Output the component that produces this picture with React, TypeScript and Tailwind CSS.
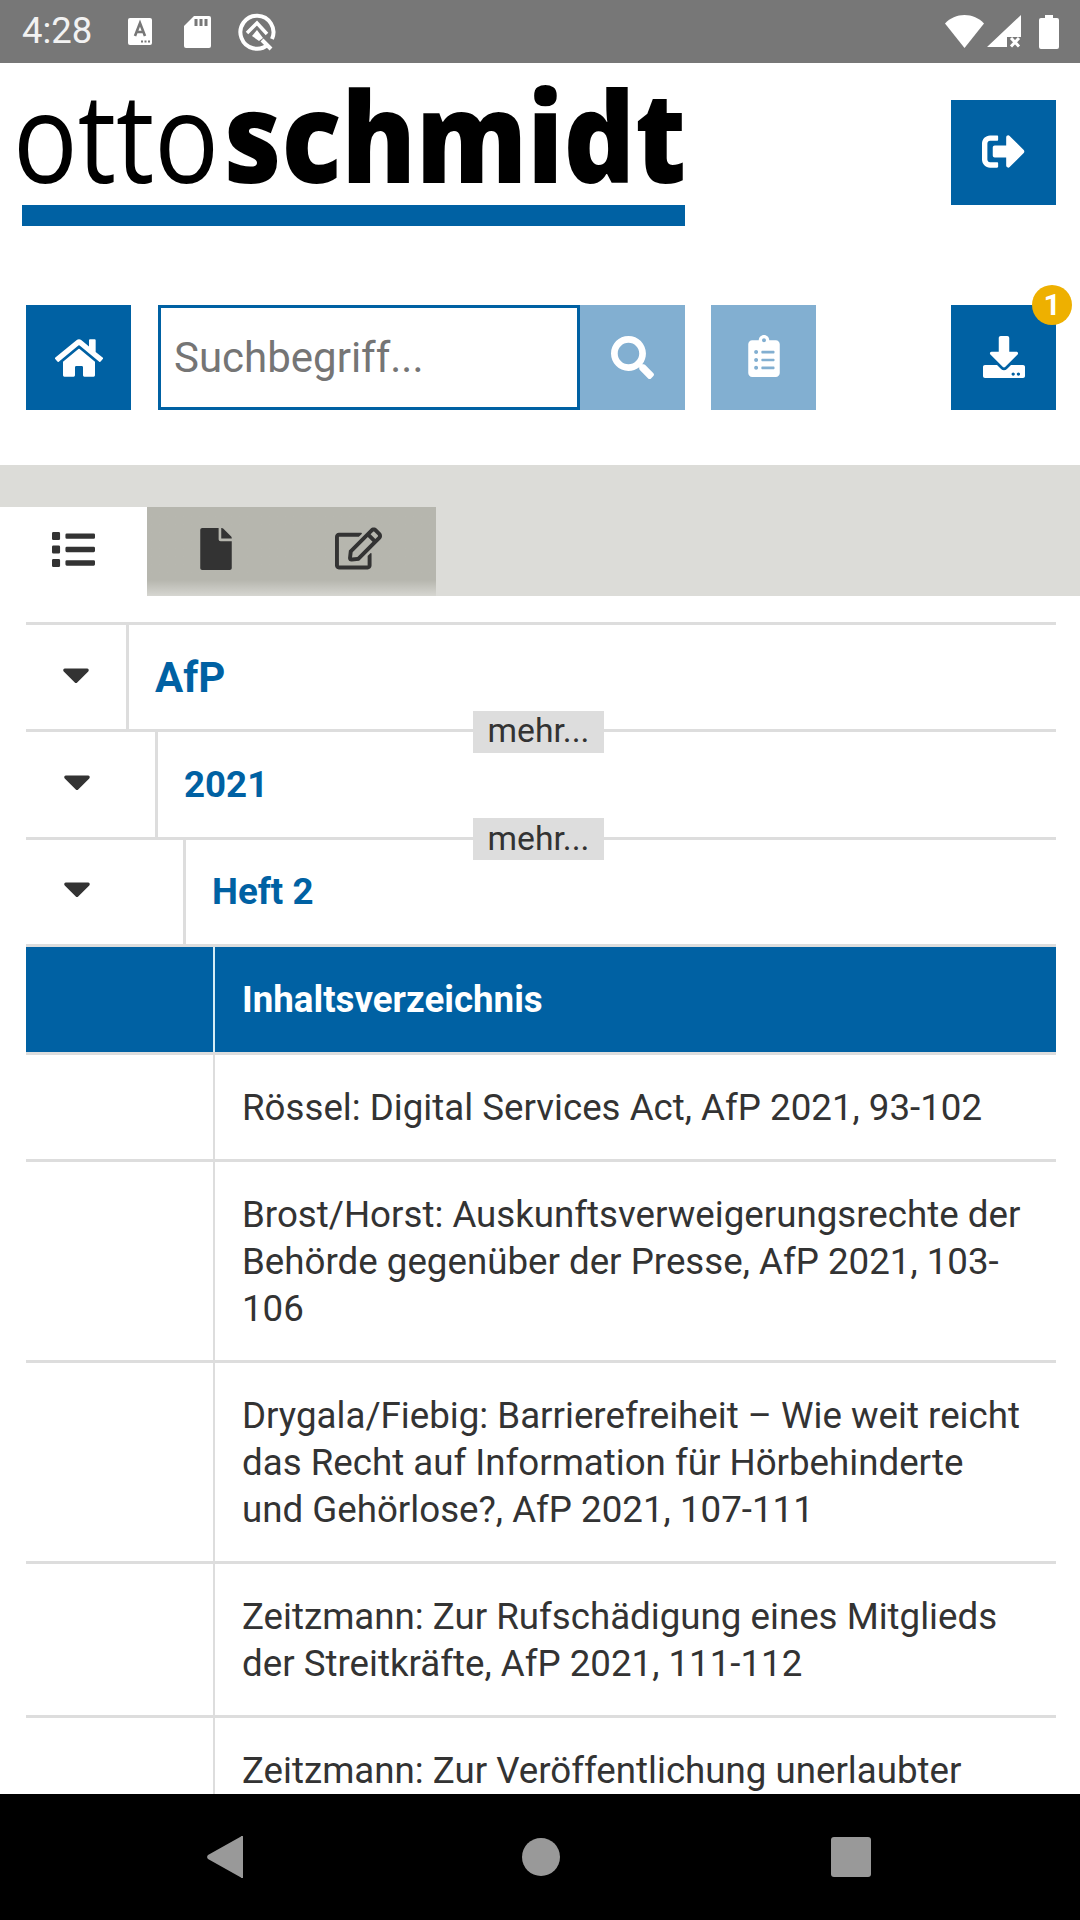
import React from 'react';
import {
  FaCaretDown,
  FaClipboardList,
  FaDownload,
  FaFile,
  FaHome,
  FaList,
  FaRegEdit,
  FaSearch,
  FaSignOutAlt,
} from 'react-icons/fa';

const treeRows = [
  { label: 'AfP', caretCol: 'w-[103px]', text: 'text-[42px]', more: true },
  { label: '2021', caretCol: 'w-[132px]', text: 'text-[36.7px]', more: true },
  { label: 'Heft 2', caretCol: 'w-[160px]', text: 'text-[36.7px]', more: false },
];

const entries = [
  ['Rössel: Digital Services Act, AfP 2021, 93-102'],
  ['Brost/Horst: Auskunftsverweigerungsrechte der', 'Behörde gegenüber der Presse, AfP 2021, 103-', '106'],
  ['Drygala/Fiebig: Barrierefreiheit – Wie weit reicht', 'das Recht auf Information für Hörbehinderte', 'und Gehörlose?, AfP 2021, 107-111'],
  ['Zeitzmann: Zur Rufschädigung eines Mitglieds', 'der Streitkräfte, AfP 2021, 111-112'],
  ['Zeitzmann: Zur Veröffentlichung unerlaubter'],
];

const StatusBar = () => (
  <div className="flex h-[63px] shrink-0 items-center bg-[#777777] pl-[22px] pr-[21px] text-[#f2f2f2]">
    <span className="w-[106px] text-[36.5px] leading-none">4:28</span>
    <svg width="24" height="27" viewBox="0 0 24 27" className="mr-[32px]">
      <rect width="24" height="27" rx="2" fill="#fff" />
      <path d="M7 18 L12 5 L17 18 M9 14 H15" fill="none" stroke="#777" strokeWidth="2.6" />
      <path d="M13 23.5h2M16.5 23.5h2M20 23.5h2" stroke="#777" strokeWidth="2" />
    </svg>
    <svg width="27" height="32" viewBox="0 0 27 32" className="mr-[27px]">
      <path d="M10 0H25a2 2 0 0 1 2 2V30a2 2 0 0 1-2 2H2a2 2 0 0 1-2-2V10Z" fill="#fff" />
      <path d="M10.500 3h3v7h-3zM15.500 3h3v7h-3zM20.500 3h3v7h-3z" fill="#777" />
    </svg>
    <svg width="38" height="38" viewBox="0 0 38 38">
      <path d="M30 31.500A16.500 16.500 0 1 1 34 26" fill="none" stroke="#fff" strokeWidth="4" />
      <path d="M9 20 L19 10 L29 21" fill="none" stroke="#fff" strokeWidth="3.500" />
      <path d="M14 23 L19 17 L25 25 L21 28 Z" fill="#fff" />
      <path d="M24 27 L33 36" stroke="#fff" strokeWidth="4" />
    </svg>
    <div className="ml-auto flex items-center">
      <svg width="39" height="33" viewBox="0 0 39 33" className="mr-[3px]">
        <path d="M0 8.500C5 3 12 0 19.500 0S34 3 39 8.500L19.500 33Z" fill="#fff" />
      </svg>
      <svg width="34" height="33" viewBox="0 0 34 33" className="mr-[18px]">
        <path d="M34 0V22H20V32H0Z" fill="#fff" />
        <path d="M24 23l8 8.500M32 23l-8 8.500" stroke="#fff" strokeWidth="3" />
      </svg>
      <svg width="20" height="34" viewBox="0 0 20 34">
        <path d="M6 0h8v3h4a2 2 0 0 1 2 2v27a2 2 0 0 1-2 2H2a2 2 0 0 1-2-2V5a2 2 0 0 1 2-2h4Z" fill="#fff" />
      </svg>
    </div>
  </div>
);

// wordmark: two squeezed runs of Open Sans, the thin one and the heavy one
const Logo = () => (
  <div className="w-[690px] pl-[13px]">
    <div className="flex h-[120px] whitespace-nowrap font-['Open_Sans',sans-serif] text-[125px] leading-[99px] text-black">
      <span className="w-[211px] origin-left scale-x-[0.86] font-normal">otto</span>
      <span className="origin-left scale-x-[0.89] font-extrabold">schmidt</span>
    </div>
    <div className="ml-[9px] h-[21px] w-[663px] bg-[#0061a3]" />
  </div>
);

const NavBar = () => (
  <div className="flex h-[126px] shrink-0 items-center bg-black">
    <div className="flex w-full items-center justify-between pl-[207px] pr-[209px]">
      <svg width="36" height="42" viewBox="0 0 36 42">
        <path d="M36 1V41a1 1 0 0 1-2 .5L1 23a3 3 0 0 1 0-4L34 .5a1 1 0 0 1 2 .5Z" fill="#999" />
      </svg>
      <div className="ml-[7px] h-[38px] w-[38px] rounded-full bg-[#999]" />
      <div className="h-[40px] w-[40px] rounded-[3px] bg-[#999]" />
    </div>
  </div>
);

export default function App() {
  return (
    <div className="flex h-[1920px] w-[1080px] flex-col overflow-hidden bg-white font-['Roboto',sans-serif] text-[#333333]">
      <StatusBar />

      <div className="flex h-[242px] shrink-0 items-start justify-between pr-[24px] pt-[22px]">
        <Logo />
        <button className="mt-[15px] flex h-[105px] w-[105px] items-center justify-center bg-[#0061a3] pb-[2px] pr-[1px] text-white">
          <FaSignOutAlt size={43} />
        </button>
      </div>

      <div className="flex h-[105px] shrink-0 pl-[26px] pr-[24px]">
        <button className="flex h-[105px] w-[105px] items-center justify-center bg-[#0061a3] text-white">
          <FaHome size={48} />
        </button>
        <div className="ml-[27px] flex h-[105px] w-[422px] items-center border-[3px] border-[#0061a3] pl-[13px] text-[42px] text-[#757575]">
          Suchbegriff...
        </div>
        <button className="flex h-[105px] w-[105px] items-center justify-center bg-[#82afd1] pb-[1px] text-white">
          <FaSearch size={43} />
        </button>
        <button className="ml-[26px] flex h-[105px] w-[105px] items-center justify-center bg-[#82afd1] pb-[4px] text-white">
          <FaClipboardList size={42} />
        </button>
        <button className="relative ml-auto flex h-[105px] w-[105px] items-center justify-center bg-[#0061a3] pb-[2px] text-white">
          <FaDownload size={42} />
          <span className="absolute left-[81px] top-[-20px] flex h-[40px] w-[40px] items-center justify-center rounded-full bg-[#eeb000] text-[30px] font-bold leading-none text-white">
            1
          </span>
        </button>
      </div>

      <div className="mt-[55px] flex h-[131px] shrink-0 items-end bg-[#dcdcd8]">
        <div className="flex h-[89px] w-[147px] items-center justify-center bg-white pb-[4px]">
          <FaList size={43} />
        </div>
        <div className="flex h-[89px] w-[289px] items-start bg-gradient-to-b from-[#b6b6ae] from-[82%] to-[#d6d6d1]">
          <div className="flex h-[84px] w-[138px] items-center justify-center">
            <FaFile size={42} />
          </div>
          <div className="flex h-[83px] w-[147px] items-center justify-center">
            <FaRegEdit size={47} />
          </div>
        </div>
      </div>

      <div className="min-h-0 flex-1 overflow-hidden pl-[26px] pr-[24px] pt-[26px]">
        {treeRows.map((row) => (
          <div key={row.label} className="relative flex h-[107.4px] border-t-[3px] border-[#dddddd]">
            <div className={`flex shrink-0 items-center border-r-[3px] border-[#dddddd] pb-[7px] ${row.caretCol}`}>
              <div className="w-[102px]">
                <FaCaretDown size={44} className="mx-auto" />
              </div>
            </div>
            <div className={`flex items-center pl-[26px] font-bold text-[#0061a3] ${row.text}`}>{row.label}</div>
            {row.more && (
              <span className="absolute left-[447px] top-[86px] z-10 flex h-[42px] w-[131px] items-center justify-center bg-[#dddddd] pb-[2px] text-[33.700px] leading-none">
                mehr...
              </span>
            )}
          </div>
        ))}

        <div className="flex h-[108px] border-t-[3px] border-[#dddddd]">
          <div className="w-[189px] shrink-0 border-r-[2px] border-[#d4ecf4] bg-[#0061a3]" />
          <div className="flex flex-1 items-center bg-[#0061a3] pl-[27px] text-[36.7px] font-bold text-white">
            Inhaltsverzeichnis
          </div>
        </div>

        {entries.map((lines) => (
          <div key={lines[0]} className="flex border-t-[3px] border-[#dddddd]">
            <div className="w-[189px] shrink-0 border-r-[2px] border-[#dddddd]" />
            <div className="flex-1 pb-[28px] pl-[27px] pt-[29px] text-[36.7px] leading-[47px]">
              {lines.map((line) => (
                <div key={line} className="whitespace-nowrap">{line}</div>
              ))}
            </div>
          </div>
        ))}
      </div>

      <NavBar />
    </div>
  );
}
